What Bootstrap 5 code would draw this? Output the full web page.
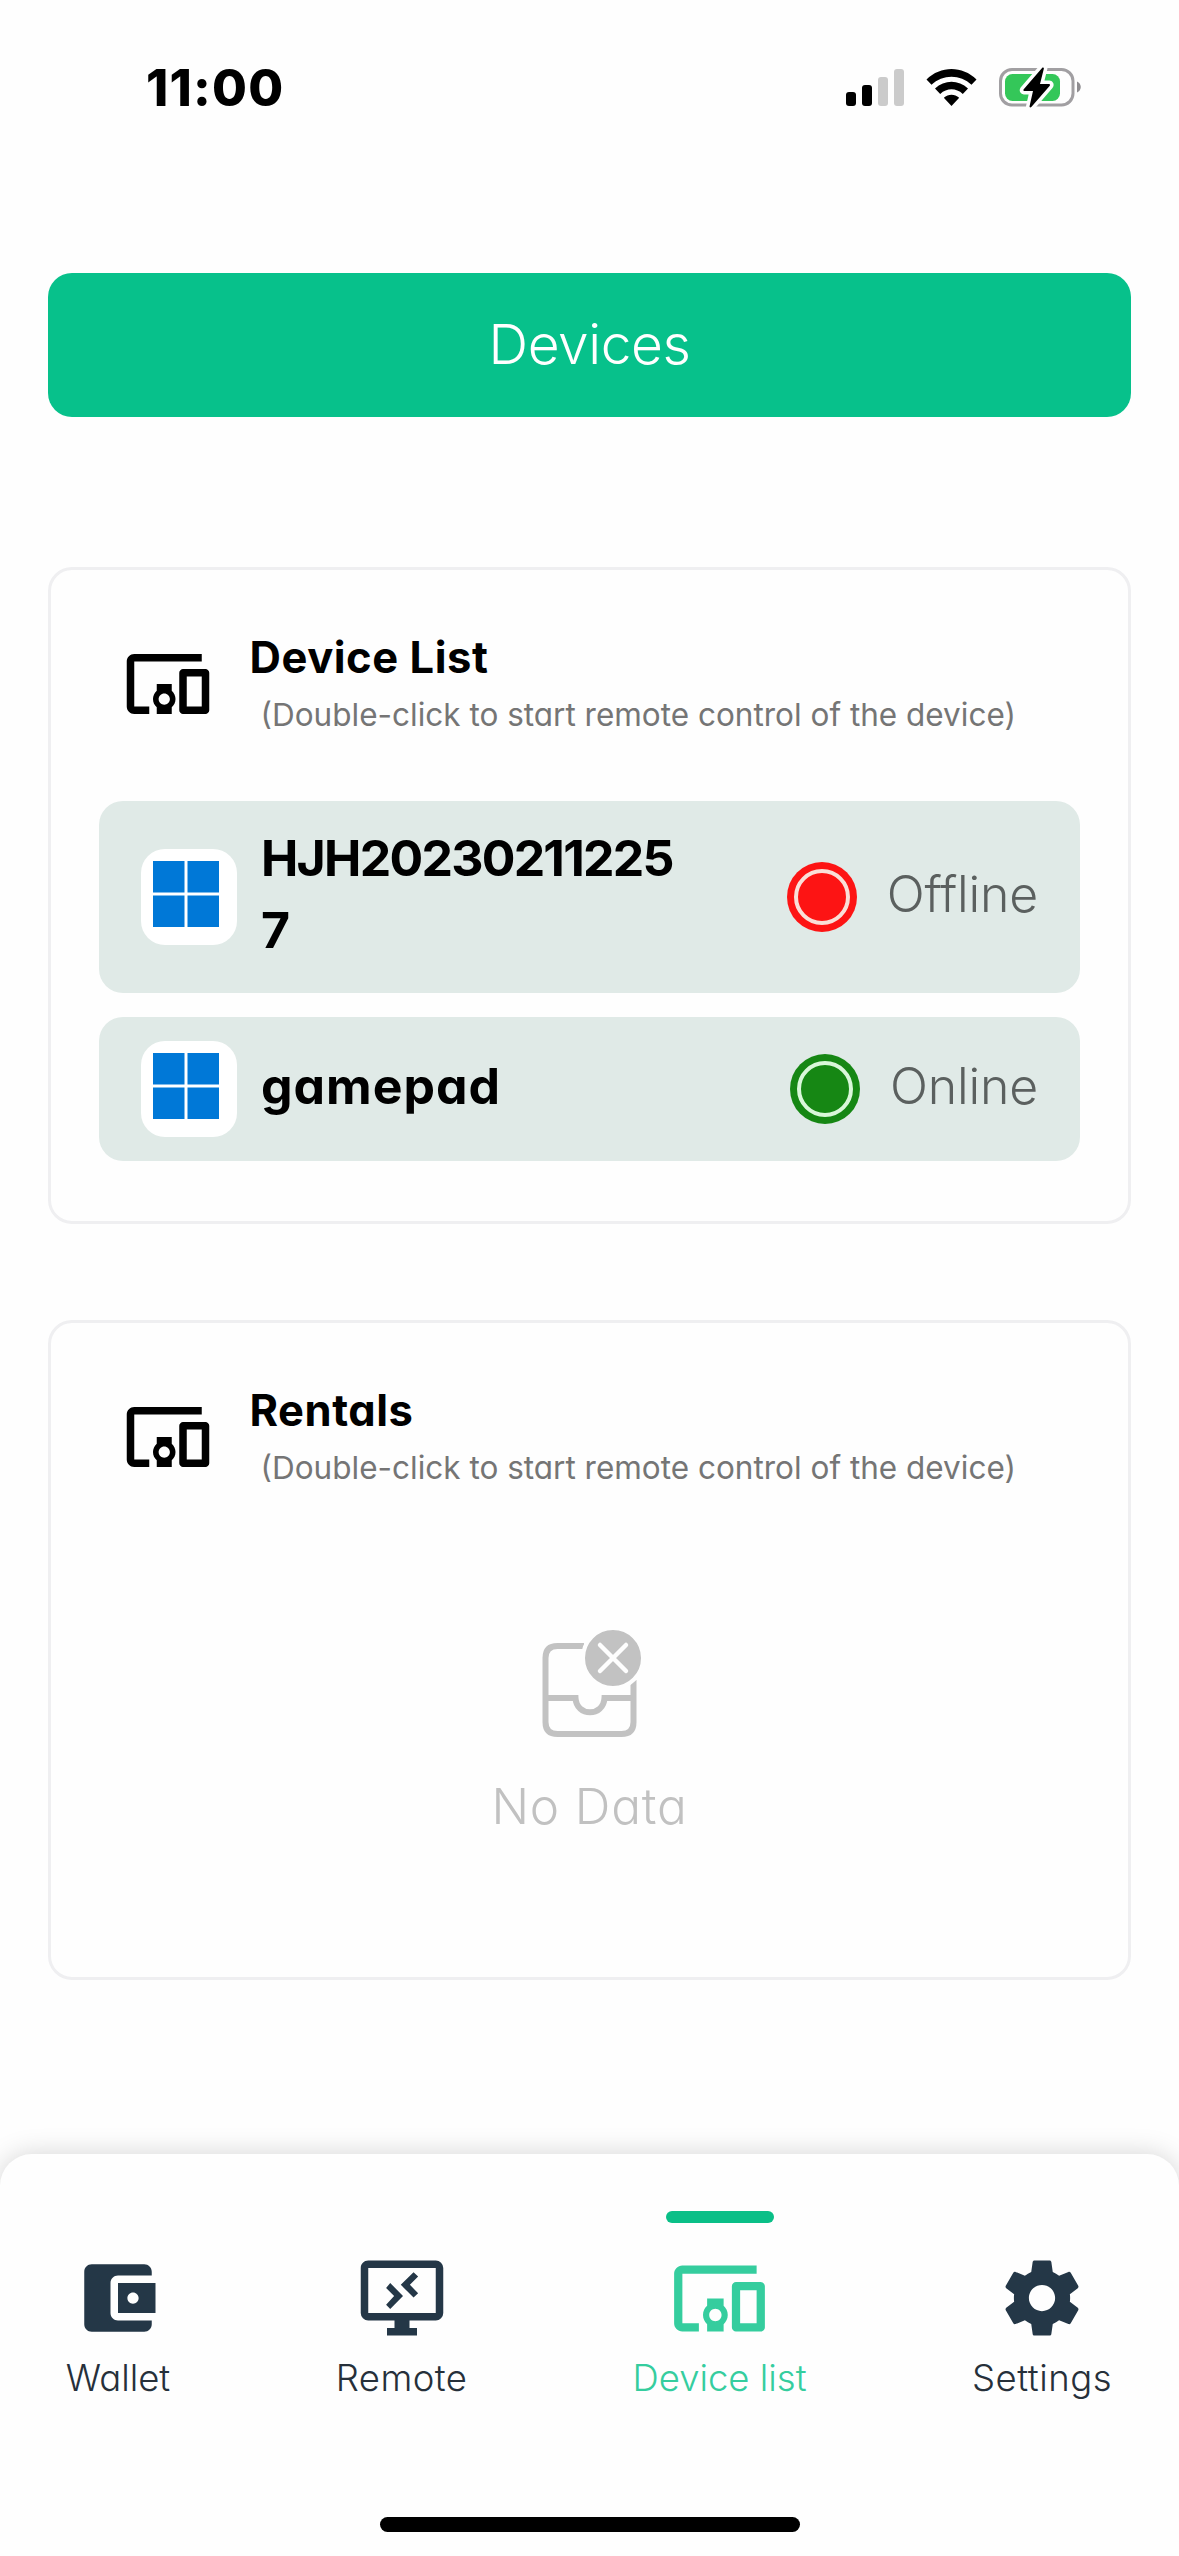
<!DOCTYPE html>
<html lang="en">
<head>
<meta charset="utf-8">
<meta name="viewport" content="width=device-width, initial-scale=1">
<title>Devices</title>
<link href="https://cdn.jsdelivr.net/npm/bootstrap@5.3.0/dist/css/bootstrap.min.css" rel="stylesheet">
<style>
  body { background: #fefefe; color: #000; font-family: Inter, "Liberation Sans", sans-serif; font-feature-settings: "cv11"; overflow: hidden; }
  .screen { width: 1179px; height: 2556px; }
  svg { display: block; flex: none; }
  .statusbar { height: 176px; padding: 0 96px 0 146px; }
  .clock { font-size: 50.5px; font-weight: 800; line-height: 60px; letter-spacing: 1.2px; }
  .page-title { height: 144px; margin: 97px 48px 0; padding-bottom: 2px; border-radius: 24px; background: #07c18b; color: #fff; font-size: 55px; font-weight: 300; letter-spacing: -.4px; }
  .panels { margin-top: 150px; padding: 0 48px; gap: 96px; }
  .panel { border: 3px solid #efeff1; border-radius: 24px; background: #fefefe; padding: 57px 48px 60px; }
  .panel-empty { height: 660px; }
  .panel-head { padding-left: 23.5px; gap: 37px; margin-bottom: 62px; }
  .panel-head svg { margin-top: 2px; }
  .panel-title { font-size: 43.5px; font-weight: 700; line-height: 60px; margin: 0; letter-spacing: .55px; }
  .panel-hint { font-size: 31.5px; line-height: 48px; margin: 4px 0 0; padding-left: 11px; color: #757575; letter-spacing: 0; }
  .devices { gap: 24px; }
  .device { min-height: 144px; padding: 21px 42px; border-radius: 24px; background: #e0eae7; }
  .os-tile { width: 96px; height: 96px; border-radius: 24px; background: #fff; padding: 12px; flex: none; }
  .device-name { width: 430px; margin-left: 24px; padding-bottom: 6px; font-size: 50px; font-weight: 700; line-height: 72px; word-break: break-all; letter-spacing: -1.75px; }
  .device-name.wide { letter-spacing: 1px; }
  .device-state { gap: 30px; }
  .state-text { padding-bottom: 6px; font-size: 50px; font-weight: 300; line-height: 72px; color: #5b605f; letter-spacing: -.2px; }
  .nodata { margin-top: 138px; gap: 38px; color: #c1c1c1; font-size: 49.5px; font-weight: 300; line-height: 60px; letter-spacing: .8px; }
  .tabbar { height: 402px; padding: 99px 65px 0; border-radius: 32px 32px 0 0; background: #fefefe; box-shadow: 0 0 27px rgba(0,0,0,.17); }
  .tab { width: 106px; color: #26303a; font-size: 36.5px; font-weight: 300; line-height: 48px; text-decoration: none; white-space: nowrap; gap: 11px; }
  .tab-remote { width: 135px; letter-spacing: .4px; }
  .tab-devices { width: 175px; }
  .tab-settings { width: 144px; letter-spacing: .5px; }
  .tab svg { color: #243747; }
  .tab.active, .tab.active svg { color: #35cd9e; }
  .tab.active svg { margin: -4.5px 0; }
  .tab-mark { top: -42px; left: 50%; width: 108px; height: 12px; margin-left: -54px; border-radius: 6px; background: #0abf87; }
  .home-bar { width: 420px; height: 15px; margin: 115px auto 0; border-radius: 8px; background: #000; }
</style>
</head>
<body>
<svg width="0" height="0" class="position-absolute" aria-hidden="true">
  <symbol id="devices" viewBox="0 0 24 24"><path fill="currentColor" d="M3 6h18V4H3c-1.1 0-2 .9-2 2v12c0 1.1.9 2 2 2h4v-2H3V6zm10 6H9v1.78c-.61.55-1 1.33-1 2.22s.39 1.67 1 2.22V20h4v-1.78c.61-.55 1-1.34 1-2.22s-.39-1.67-1-2.22V12zm-2 5.5c-.83 0-1.5-.67-1.5-1.5s.67-1.5 1.5-1.5 1.5.67 1.5 1.5-.67 1.5-1.5 1.5zM22 8h-6c-.5 0-1 .5-1 1v10c0 .5.5 1 1 1h6c.5 0 1-.5 1-1V9c0-.5-.5-1-1-1zm-1 10h-4v-8h4v8z"/></symbol>
  <symbol id="windows" viewBox="0 0 66 66"><path fill="#0078d7" d="M0 0h31.5v31.5H0zM34.5 0H66v31.5H34.5zM0 34.500h31.500V66H0zM34.500 34.500H66V66H34.500z"/></symbol>
</svg>

<div class="screen d-flex flex-column">
  <header class="statusbar d-flex align-items-center justify-content-between">
    <div class="clock">11:00</div>
    <svg width="238" height="44" viewBox="845 66 238 44">
      <g fill="#000"><rect x="846" y="92" width="10" height="14" rx="3"/><rect x="862" y="85" width="10" height="21" rx="3"/></g>
      <g fill="#cbcbcb"><rect x="878" y="77" width="10" height="29" rx="3"/><rect x="894" y="69" width="10" height="37" rx="3"/></g>
      <path d="M926.500 79.500C940.500 65.500 962.500 65.500 976.500 79.500L971.500 84.800C960.500 74 942.500 74 931.500 84.800zM935 88.500C944.500 79.600 958.500 79.600 968 88.500L962.800 94C956 87.800 947 87.800 940.200 94zM943.800 97.700C948.500 93.800 954.500 93.800 959.200 97.700L951.500 106z"/>
      <rect x="1000.500" y="69.500" width="72.500" height="35.500" rx="11.500" fill="none" stroke="#a19fa2" stroke-width="3"/>
      <path d="M1077 81.500c5 2.300 5 8.700 0 11z" fill="#8f8d90"/>
      <rect x="1005" y="74" width="55" height="27" rx="7.500" fill="#34c759"/>
      <path d="M1042.500 67.500L1023.500 89.500q-.8 1.300.8 1.500H1033L1029.500 106.500q.4 1.500 1.800.6L1049.800 85.700q.9-1.400-.8-1.700H1040L1043.900 68.500q-.1-1.500-1.400-1z" fill="#000" stroke="#fefefe" stroke-width="7" paint-order="stroke" stroke-linejoin="round"/>
    </svg>
  </header>

  <h1 class="page-title mb-0 d-flex align-items-center justify-content-center">Devices</h1>

  <main class="panels d-flex flex-column">
    <section class="panel">
      <div class="panel-head d-flex align-items-center">
        <svg width="90" height="90"><use href="#devices"/></svg>
        <div>
          <h2 class="panel-title">Device List</h2>
          <p class="panel-hint">(Double-click to start remote control of the device)</p>
        </div>
      </div>
      <div class="devices d-flex flex-column">
        <div class="device d-flex align-items-center">
          <div class="os-tile"><svg width="66" height="66"><use href="#windows"/></svg></div>
          <div class="device-name">HJH202302112257</div>
          <div class="device-state d-flex align-items-center ms-auto">
            <svg width="70" height="70" viewBox="0 0 70 70"><circle cx="35" cy="35" r="35" fill="#fd1414"/><circle cx="35" cy="35" r="26" fill="none" stroke="#fadfd8" stroke-width="4"/></svg>
            <span class="state-text">Offline</span>
          </div>
        </div>
        <div class="device d-flex align-items-center">
          <div class="os-tile"><svg width="66" height="66"><use href="#windows"/></svg></div>
          <div class="device-name wide">gamepad</div>
          <div class="device-state d-flex align-items-center ms-auto">
            <svg width="70" height="70" viewBox="0 0 70 70"><circle cx="35" cy="35" r="35" fill="#168714"/><circle cx="35" cy="35" r="26" fill="none" stroke="#d9f7d9" stroke-width="4"/></svg>
            <span class="state-text">Online</span>
          </div>
        </div>
      </div>
    </section>

    <section class="panel panel-empty">
      <div class="panel-head d-flex align-items-center mb-0">
        <svg width="90" height="90"><use href="#devices"/></svg>
        <div>
          <h2 class="panel-title">Rentals</h2>
          <p class="panel-hint">(Double-click to start remote control of the device)</p>
        </div>
      </div>
      <div class="nodata d-flex flex-column align-items-center">
        <svg width="104" height="108" viewBox="0 0 104 108">
          <g fill="none" stroke="#c2c2c2" stroke-width="6">
            <path d="M46 16H19.500Q7.500 16 7.500 28V92Q7.500 104 19.500 104H83.500Q95.500 104 95.500 92V50"/>
            <path d="M7.500 68H37.500C38.500 87 65.500 87 66.500 68H95.500"/>
          </g>
          <circle cx="75" cy="28" r="30" fill="#c2c2c2" stroke="#fefefe" stroke-width="4"/>
          <path d="M62 15L88 41M88 15L62 41" stroke="#fefefe" stroke-width="4.500" stroke-linecap="round"/>
        </svg>
        <div>No Data</div>
      </div>
    </section>
  </main>

  <nav class="tabbar mt-auto">
    <div class="d-flex justify-content-between">
      <a class="tab d-flex flex-column align-items-center">
        <svg width="90" height="90" viewBox="0 0 24 24"><path fill="currentColor" d="M21 18v1c0 1.100-.9 2-2 2H5c-1.110 0-2-.9-2-2V5c0-1.100.89-2 2-2h14c1.100 0 2 .9 2 2v1h-9c-1.110 0-2 .9-2 2v8c0 1.100.89 2 2 2h9zm-9-2h10V8H12v8zm4-2.500c-.83 0-1.500-.67-1.500-1.500s.67-1.500 1.500-1.500 1.500.67 1.500 1.500-.67 1.500-1.500 1.500z"/></svg>
        <span>Wallet</span>
      </a>
      <a class="tab tab-remote d-flex flex-column align-items-center">
        <svg width="90" height="90" viewBox="0 0 24 24"><path fill="currentColor" d="M21 16V4H3v12h18m0-14a2 2 0 0 1 2 2v12a2 2 0 0 1-2 2h-7v2h2v2H8v-2h2v-2H3a2 2 0 0 1-2-2V4c0-1.110.89-2 2-2h18zM8.860 8L12.270 11.470 8.860 14.900 7.760 13.800 9.900 11.470 7.760 9.330zM15.080 5.160L16.300 6.250 14.100 8.480 16.300 10.700 15.080 11.850 11.670 8.480z"/></svg>
        <span>Remote</span>
      </a>
      <a class="tab tab-devices active position-relative d-flex flex-column align-items-center">
        <i class="tab-mark position-absolute"></i>
        <svg width="99" height="99"><use href="#devices"/></svg>
        <span>Device list</span>
      </a>
      <a class="tab tab-settings d-flex flex-column align-items-center">
        <svg width="90" height="90" viewBox="0 0 24 24"><path fill="currentColor" d="M19.430 12.980c.04-.32.07-.64.07-.98s-.03-.66-.07-.98l2.110-1.650c.19-.15.24-.42.12-.64l-2-3.460c-.12-.22-.39-.3-.61-.22l-2.490 1c-.52-.4-1.080-.73-1.690-.98l-.38-2.650C14.460 2.180 14.250 2 14 2h-4c-.25 0-.46.18-.49.42l-.38 2.650c-.61.25-1.170.59-1.690.98l-2.490-1c-.23-.09-.49 0-.61.22l-2 3.460c-.13.22-.07.49.12.64l2.110 1.650c-.04.32-.07.65-.07.98s.03.66.07.98l-2.110 1.650c-.19.15-.24.42-.12.64l2 3.460c.12.22.39.3.61.22l2.490-1c.52.4 1.080.73 1.690.98l.38 2.650c.03.24.24.42.49.42h4c.25 0 .46-.18.49-.42l.38-2.650c.61-.25 1.170-.59 1.690-.98l2.490 1c.23.09.49 0 .61-.22l2-3.460c.12-.22.07-.49-.12-.64l-2.110-1.650zM12 15.500c-1.930 0-3.500-1.570-3.500-3.500s1.570-3.500 3.500-3.500 3.500 1.570 3.500 3.500-1.570 3.500-3.500 3.500z"/></svg>
        <span>Settings</span>
      </a>
    </div>
    <div class="home-bar"></div>
  </nav>
</div>
<script src="https://cdn.jsdelivr.net/npm/bootstrap@5.3.0/dist/js/bootstrap.bundle.min.js"></script>
</body>
</html>
